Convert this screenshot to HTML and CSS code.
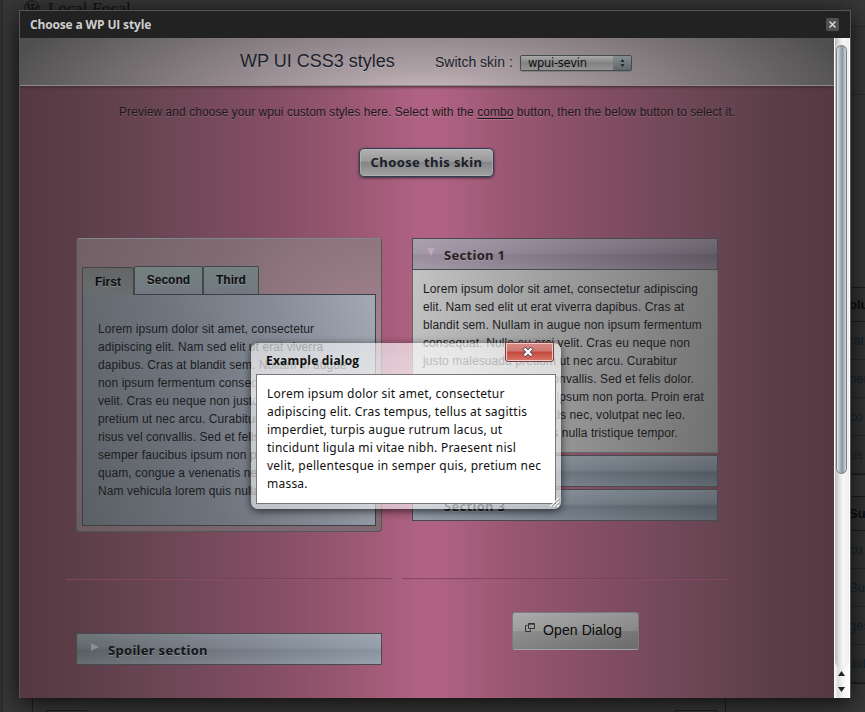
FILE: index.html
```
<!DOCTYPE html>
<html lang="en">
<head>
<meta charset="utf-8">
<title>WP UI CSS3 styles</title>
<link rel="stylesheet" href="styles.css">
</head>
<body>
<div class="admin">
  <div class="rail"></div>
  <header class="site">
    <svg class="wp" viewBox="0 0 16 16" width="16" height="16"><circle cx="8" cy="8" r="7.2" fill="none" stroke="#151515"/><path d="M2.5 4.5h3M7 4.5h3.5M3.8 4.8l3 8 1.7-5M7.8 4.8l3 8 2.4-7.5" fill="none" stroke="#151515" stroke-width="1.6"/></svg>
    <span>Local Focal</span>
  </header>
  <div class="frame-bottom"><i></i><i></i></div>
  <aside class="side">
    <div class="r r0"></div>
    <div class="r r1"></div>
    <div class="box">
      <b>olu</b><span>rat</span><span>ner</span><span>co</span><span>us d</span>
    </div>
    <div class="box second">
      <b>Sup</b><span>cu</span><span>Bug</span><span>ges</span><span>.bil</span>
    </div>
  </aside>
</div>

<div class="modal">
  <div class="titlebar">
    <span>Choose a WP UI style</span>
    <svg width="13" height="13" viewBox="0 0 13 13"><rect width="13" height="13" rx="2" fill="#505050"/><path d="M3.500 3.500l6 6M9.500 3.500l-6 6" stroke="#d8d8d8" stroke-width="1.500"/></svg>
  </div>
  <div class="view">
    <main class="page">
      <div class="head">
        <h1>WP UI CSS3 styles</h1>
        <label>Switch skin :</label>
        <div class="select"><span>wpui-sevin</span><em><svg width="7" height="10" viewBox="0 0 7 10"><path d="M1.500 3.800l2-2.600 2 2.600zM1.500 6.200l2 2.600 2-2.600z" fill="#151515"/></svg></em></div>
      </div>
      <p class="intro">Preview and choose your wpui custom styles here. Select with the <u>combo</u> button, then the below button to select it.</p>
      <div class="choose">Choose this skin</div>
      <div class="cols">
        <div class="tabs">
          <div class="tabnav"><b class="on">First</b><b>Second</b><b>Third</b></div>
          <div class="tabbody">Lorem ipsum dolor sit amet, consectetur<br>adipiscing elit. Nam sed elit ut erat viverra<br>dapibus. Cras at blandit sem. Nullam in augue<br>non ipsum fermentum consequat.<br>velit. Cras eu neque non justo<br>pretium ut nec arcu. Curabitur<br>risus vel convallis. Sed et felis dolor.<br>semper faucibus ipsum non porta.<br>quam, congue a venenatis nec,<br>Nam vehicula lorem quis nulla</div>
        </div>
        <div class="accordion">
          <div class="bar open"><i class="down"></i>Section 1</div>
          <div class="accbody">Lorem ipsum dolor sit amet, consectetur adipiscing<br>elit. Nam sed elit ut erat viverra dapibus. Cras at<br>blandit sem. Nullam in augue non ipsum fermentum<br>consequat. Nulla eu orci velit. Cras eu neque non<br>justo malesuada pretium ut nec arcu. Curabitur<br><span class="l6">risus vel convallis. Sed et felis dolor.</span><span class="l7">semper faucibus ipsum non porta. Proin erat</span><span class="l8">quam, congue a venenatis nec, volutpat nec leo.</span><span class="l9">Nam vehicula lorem quis nulla tristique tempor.</span></div>
          <div class="bar"><i class="right"></i></div>
          <div class="bar"><i class="right"></i>Section 3</div>
        </div>
      </div>
      <div class="rules"><hr><hr></div>
      <div class="cols low">
        <div class="bar"><i class="right"></i>Spoiler section</div>
        <div class="open-btn"><svg width="10" height="9" viewBox="0 0 10 9" fill="none" stroke="#333"><path d="M2.500 2.500h-2v6h5v-2" /><path d="M3.500.5h6v5h-6zM3.500 1.200h6"/></svg>Open Dialog</div>
      </div>
    </main>
    <div class="scroll">
      <div class="track"><div class="thumb"></div></div>
      <svg width="16" height="30" viewBox="0 0 16 30"><path d="M4 8l3.500-5L11 8zM4 19l3.500 5L11 19z" fill="#222"/></svg>
    </div>
  </div>
</div>

<div class="dialog">
  <div class="dtitle">Example dialog</div>
  <div class="close"><svg width="12" height="10" viewBox="0 0 12 10"><path d="M2 1l8 8M10 1l-8 8" stroke="#5d4f62" stroke-width="4"/><path d="M2.500 1.500l7 7M9.500 1.500l-7 7" stroke="#fff" stroke-width="2.300"/></svg></div>
  <div class="dbody">Lorem ipsum dolor sit amet, consectetur<br>adipiscing elit. Cras tempus, tellus at sagittis<br>imperdiet, turpis augue rutrum lacus, ut<br>tincidunt ligula mi vitae nibh. Praesent nisl<br>velit, pellentesque in semper quis, pretium nec<br>massa.</div>
  <svg class="grip" width="11" height="11" viewBox="0 0 11 11"><path d="M1 10l9-9M4.500 10L10 4.500M8 10l2-2" stroke="#fff" stroke-width="1.200"/><path d="M2 10.500l8.500-8.500M5.500 10.500l5-5" stroke="#777" stroke-width=".7"/></svg>
</div>
</body>
</html>
```
FILE: styles.css
```
* { box-sizing: border-box; }
body { margin: 0; width: 865px; height: 712px; overflow: hidden; position: relative; background: #373737; font: 12px/18px "Liberation Sans", Arial, sans-serif; color: #1c1c1f; }

.admin { position: absolute; inset: 0; overflow: hidden; }
.rail { position: absolute; left: 0; top: 0; width: 3px; height: 712px; background: #303030; border-right: 1px solid #292929; }
.site { display: flex; gap: 8px; padding-left: 24px; font: 17px/18px "Liberation Serif", serif; color: #111; letter-spacing: .2px; }
.frame-bottom { position: absolute; left: 32px; top: 698px; width: 694px; height: 14px; border: solid #202020; border-width: 0 1px; display: flex; justify-content: space-between; padding: 12px 7px 0 12px; }
.frame-bottom i { width: 44px; height: 6px; border: 1px solid #1c1c1c; border-radius: 3px; }
.side { position: absolute; left: 750px; top: 0; width: 140px; }
.r { border-bottom: 1px solid #2b2b2b; }
.r0 { height: 27px; }
.r1 { height: 68px; }
.box { margin-top: 192px; border: 1px solid #1c1c1c; width: 140px; background: #333; }
.box b, .box span { display: block; height: 38px; line-height: 38px; padding-left: 98px; border-bottom: 1px solid #272727; white-space: nowrap; color: #13242e; font-size: 13px; }
.box b { height: 34px; line-height: 34px; color: #0c0c0c; border-color: #1c1c1c; }
.box.second { margin-top: 21px; }

.modal { position: absolute; left: 19px; top: 10px; width: 832px; height: 688px; border: 1px solid #555; border-bottom: 0; box-shadow: 0 4px 22px #000c; display: flex; flex-direction: column; background: #222; }
.titlebar { height: 27px; flex: none; display: flex; align-items: center; justify-content: space-between; padding: 0 11px 0 10px; color: #cfcfcf; font: bold 12px/27px "Open Sans", sans-serif; letter-spacing: -.15px; }
.view { flex: 1; display: flex; min-height: 0; }
.page { width: 814px; background: linear-gradient(90deg, #553842 0, #5c3e49 60px, #6d4755 150px, #824d63 240px, #96566f 320px, #b06283 400px, #b06283 420px, #96566f 500px, #824d63 585px, #6d4755 670px, #5c3e49 750px, #553842 100%); overflow: hidden; }
.head { height: 48px; display: flex; align-items: flex-start; padding-left: 220px; background: radial-gradient(ellipse 440px 150px at 407px 70px, #d6c6cb 0, #afa2a7 25%, #8a8185 55%, #636062 85%, #504f50 100%); border-bottom: 1px solid #918b8d; box-shadow: 0 1px 3px #3d2932; color: #1c202b; }
.head h1 { margin: 0; width: 195px; font: 18px/46px "Liberation Sans", sans-serif; text-shadow: 0 1px #bbb8; white-space: nowrap; }
.head label { width: 85px; font-size: 14px; line-height: 48px; text-shadow: 0 1px #bbb8; white-space: nowrap; }
.select { margin-top: 17px; width: 112px; height: 16px; border: 1px solid #454b4f; border-radius: 2px; display: flex; justify-content: space-between; background: linear-gradient(#aaa, #828282 50%, #949494); font: 11.5px/15px "DejaVu Sans", sans-serif; letter-spacing: -.3px; color: #111; padding-left: 7px; box-shadow: 0 1px 1px #6668; }
.select em { width: 18px; display: flex; align-items: center; justify-content: center; background: linear-gradient(#858d90, #5f686c); }
.intro { margin: 17px 0 0; text-align: center; white-space: nowrap; letter-spacing: .06px; color: #1a181b; text-shadow: 0 1px #ffffff25; }
.intro u { text-decoration-thickness: 1px; text-underline-offset: 2px; }
.choose { margin: 27px auto 0; width: 135px; height: 29px; border: 1px solid #303e55; border-radius: 5px; background: linear-gradient(#b2b2b2, #9a9a9a 45%, #858585 50%, #a3a3a3); text-align: center; font: bold 13px/27px "Noto Sans", sans-serif; letter-spacing: .4px; box-shadow: 0 1px 3px #402a38, inset 0 0 0 1px #bbb8; color: #1a202a; white-space: nowrap; position: relative; left: -.5px; }
.cols { display: grid; grid-template-columns: 306px 306px; column-gap: 30px; padding-left: 56px; margin-top: 61px; }
.tabs { height: 294px; border: 1px solid #535557; border-top-color: #7d8a8c; border-radius: 4px; padding: 27px 5px 5px; background: radial-gradient(ellipse 440px 420px at 100% 35%, #a4848f, #826c74 40%, #625659 100%); }
.tabnav { display: flex; height: 28px; align-items: flex-end; }
.tabnav b { height: 28px; padding: 0 12px; border: 1px solid #434749; border-radius: 2px 2px 0 0; border-bottom: 0; line-height: 27px; color: #0c0c0e; background: linear-gradient(#74817f, #717880); text-shadow: 0 1px #fff3; letter-spacing: -.03px; }
.tabnav b.on { height: 28px; margin: 0 0 -1px; line-height: 29px; background: linear-gradient(#656565, #686d70); position: relative; border-color: #444 #444 transparent; }
.tabbody { height: 232px; border: 1px solid #3c4044; padding: 25px 15px; white-space: nowrap; letter-spacing: .07px; background: linear-gradient(75deg, #5b6065 0%, #6f757d 40%, #868c97 70%, #a3a9b4 100%); }
.accordion { display: flex; flex-direction: column; gap: 2px; }
.bar { height: 32px; border: 1px solid #474b50; padding-left: 31px; display: flex; align-items: center; font: bold 13px/20px "Noto Sans", sans-serif; letter-spacing: .3px; color: #15161a; text-shadow: 0 1px #fff3; position: relative; background: linear-gradient(#ffffff24, #ffffff10 46%, #0000000d 54%, #ffffff10), linear-gradient(90deg, #8d98a5, #555d66); padding-top: 2px; }
.bar.open { background: linear-gradient(#ffffff18, #ffffff08 46%, #0000000d 54%, #ffffff08), linear-gradient(90deg, #a397a8, #625b66); color: #2c2023; margin-bottom: -2px; }
.bar i { position: absolute; left: 14px; top: 9px; border: 4px solid transparent; }
.bar i.down { border-top: 8px solid #bda9b5; }
.bar i.right { border-left: 8px solid #888d91; }
.accbody { height: 183px; border: 1px solid #666; border-top: 0; padding: 10px; white-space: nowrap; letter-spacing: .1px; background: linear-gradient(100deg, #c3c3c3, #a0a0a0 40%, #707070 100%); }
.accbody span { display: block; text-align: right; }
.l6 { width: 271px; }
.l7 { width: 281px; }
.l8 { width: 262px; }
.l9 { width: 255px; }
.rules { display: grid; grid-template-columns: 326px 326px; gap: 10px; padding-left: 46px; margin-top: 46px; }
.rules hr { margin: 0; border: 0; width: 100%; height: 2px; border-top: 1px solid #6c3c5099; border-bottom: 1px solid #a2567466; }
.low { margin-top: 32px; }
.low .bar { margin-top: 21px; background: linear-gradient(#ffffff1c, #ffffff08 46%, #0000000d 54%, #ffffff10), linear-gradient(90deg, #5c6366, #757c86 45%, #929ba8); }
.open-btn { width: 127px; height: 38px; margin-left: 100px; border: 1px solid #777b7b; border-bottom-color: #a2a5a5; border-radius: 3px; background: linear-gradient(#ffffff12 50%, #0000000c 50%), linear-gradient(165deg, #a5a5a5, #707070); font: 14px/35px "Liberation Sans", sans-serif; color: #0b0b0b; display: flex; gap: 8px; padding-left: 12px; letter-spacing: .1px; white-space: nowrap; }
.open-btn svg { margin-top: 10px; }
.scroll { width: 16px; background: linear-gradient(90deg, #fff, #ddd 25%, #f5f5f5 60%, #fff); display: flex; flex-direction: column; }
.track { flex: 1; margin: 0 1px; padding: 7px 1px 0; border-radius: 0 0 7px 7px; background: linear-gradient(90deg, #bbb, #e5e5e5 35%, #f7f7f7 60%, #eee); }
.thumb { width: 11px; height: 429px; border: 1px solid #747c82; border-radius: 6px; background: linear-gradient(90deg, #e0e5e8, #a9b3ba 35%, #8c969d 60%, #d4dce0); }
.scroll svg { flex: none; }

.dialog { position: absolute; left: 251px; top: 343px; width: 310px; height: 166px; border-radius: 7px; background: linear-gradient(100deg, #fff0 35%, #ffffff30 60%, #fff0 85%), linear-gradient(#ffffff98 0, #ffffffb8 57px, #ffffff98 60px, #ffffff88); box-shadow: 0 2px 9px #000a; padding: 0 5px; }
.dtitle { height: 31px; padding: 0 10px; font: bold 12px/35px "Open Sans", sans-serif; letter-spacing: .2px; color: #111; }
.close { position: absolute; left: 254px; top: -1px; width: 49px; height: 20px; border: 1px solid #783d3d; border-radius: 1px 1px 3px 3px; box-shadow: inset 0 0 0 1px #f0c8c8; background: linear-gradient(#d98c88, #cd7770 45%, #c5473c 50%, #d8766a); display: flex; align-items: center; justify-content: center; padding-right: 4px; }
.dbody { height: 130px; border: 1px solid #777; background: #fff; padding: 10px; font: 12px/18px "Noto Sans", sans-serif; letter-spacing: .23px; color: #111; white-space: nowrap; }
.grip { position: absolute; right: 1px; bottom: 1px; }
```
